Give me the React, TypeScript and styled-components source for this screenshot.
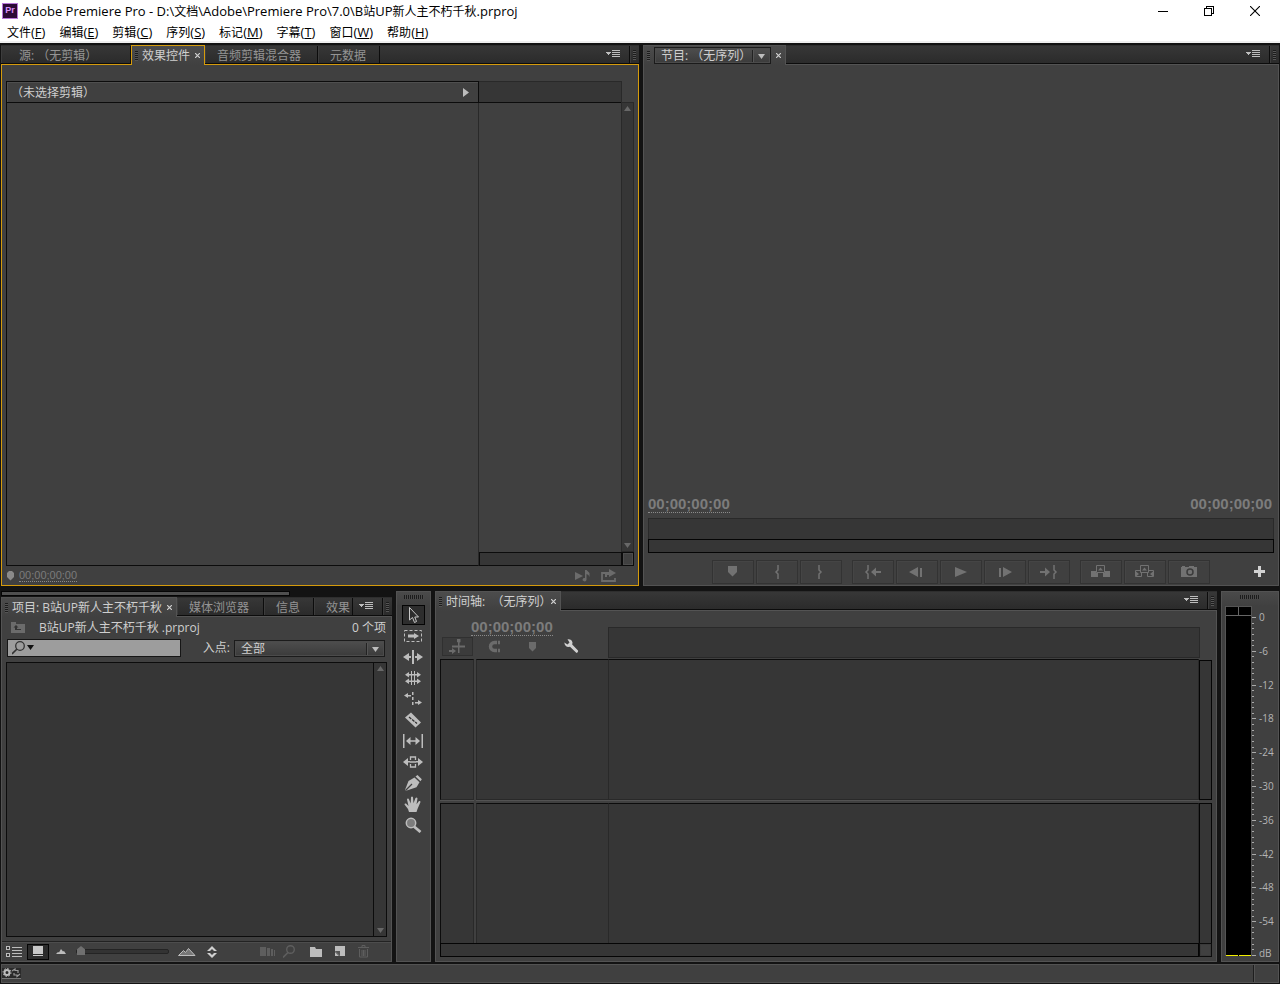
import React from "react";
import styled, { createGlobalStyle, css } from "styled-components";

const c = {
  app: "#131313",
  panel: "#404040",
  well: "#363636",
  edge: "#535353",
  line: "#0c0c0c",
  soft: "#292929",
  gold: "#d59b0c",
  text: "#cfcfcf",
  dim: "#949494",
  off: "#6b6b6b",
  icon: "#bdbdbd",
};

const Global = createGlobalStyle`
  *, *::before, *::after { box-sizing: border-box; }
  body {
    margin: 0;
    background: ${c.app};
    color: ${c.text};
    font: 12px/16px "Open Sans", "Noto Sans CJK SC", sans-serif;
    text-spacing-trim: space-all;
  }
  button, input, select {
    margin: 0;
    padding: 0;
    border: 0;
    background: none;
    color: inherit;
    font: inherit;
  }
  svg { display: block; flex: none; }
`;

const Window = styled.div`
  display: flex;
  flex-direction: column;
  min-height: 100vh;
`;

/* ---------- window frame ---------- */

const Header = styled.header`
  background: #fff;
  color: #000;
  border-bottom: 2px solid #f0f0f0;
`;

const TitleBar = styled.div`
  display: flex;
  align-items: center;
  height: 22px;
  padding: 0 2px;
`;

const Logo = styled.span`
  width: 16px;
  height: 16px;
  border: 1px solid #b777d8;
  background: #2c0a36;
  color: #d891f8;
  font: bold 9px/13px "Liberation Sans", sans-serif;
  text-align: center;
`;

const Title = styled.h1`
  flex: 1;
  margin: 0 0 0 5px;
  font-size: 13px;
  font-weight: 400;
  line-height: 20px;
  white-space: nowrap;
  overflow: hidden;
`;

const Han = styled.span`
  font-size: 12px;
`;

const WindowButton = styled.button`
  display: flex;
  justify-content: center;
  align-items: center;
  width: 46px;
  height: 20px;
`;

const MenuBar = styled.nav`
  display: flex;
  gap: 14px;
  height: 19px;
  padding-left: 7px;
`;

const MenuItem = styled.button`
  font-size: 13px;
  line-height: 20px;
  white-space: nowrap;
`;

/* ---------- work area ---------- */

const Workspace = styled.main`
  flex: 1;
  display: grid;
  grid-template-rows: minmax(300px, 541fr) minmax(300px, 371fr);
  row-gap: 5px;
  padding: 2px 1px;
`;

const TopRow = styled.div`
  display: grid;
  grid-template-columns: minmax(0, 638fr) minmax(0, 636fr);
  gap: 4px;
`;

const BottomRow = styled.div`
  display: grid;
  grid-template-columns: minmax(0, 391fr) 35px minmax(0, 782fr) 58px;
  gap: 4px;
`;

const Panel = styled.section`
  display: flex;
  flex-direction: column;
  flex: 1;
  min-width: 0;
`;

const TabBar = styled.div`
  display: flex;
  height: 19px;
  background: linear-gradient(#373737, #2b2b2b);
  border-top: 1px solid #2e2e2e;
  border-bottom: 1px solid ${c.line};
`;

const Tab = styled.button<{ $w: number; $pad?: number }>`
  width: ${(p) => p.$w}px;
  padding-left: ${(p) => p.$pad ?? 12}px;
  border-right: 1px solid ${c.line};
  box-shadow: inset 1px 0 #3d3d3d;
  color: ${c.dim};
  line-height: 19px;
  text-align: left;
  white-space: nowrap;
  overflow: hidden;
`;

const ActiveTab = styled.div<{ $focus?: boolean }>`
  position: relative;
  display: flex;
  align-items: center;
  margin: -1px 0 -2px;
  padding: 0 2px 0 3px;
  background: linear-gradient(#4c4c4c, ${c.panel});
  border: 1px solid ${(p) => (p.$focus ? c.gold : c.edge)};
  border-bottom: 0;
  white-space: nowrap;
`;

const TabLabel = styled.button<{ $tight?: boolean }>`
  line-height: 18px;
  margin-left: 4px;
  margin-right: ${(p) => (p.$tight ? -5 : 0)}px;
`;

const CloseButton = styled.button`
  display: flex;
  padding: 4px 2px 4px 5px;
`;

const BarEnd = styled.div`
  display: flex;
  align-items: center;
  margin-left: auto;
`;

const MenuButton = styled.button`
  display: flex;
  align-items: center;
  height: 17px;
  padding-right: 8px;
`;

const GripCell = styled.span`
  display: flex;
  align-items: center;
  height: 17px;
  padding: 0 3px;
  border-left: 1px solid ${c.line};
  box-shadow: inset 1px 0 #3d3d3d;
`;

const Grip = styled.span<{ $wide?: boolean }>`
  display: block;
  flex: none;
  ${(p) =>
    p.$wide
      ? css`
          width: 20px;
          height: 4px;
          background: repeating-linear-gradient(90deg, #1c1c1c 0 1px, #4a4a4a 1px 2px);
        `
      : css`
          width: 3px;
          height: 10px;
          background: repeating-linear-gradient(#1c1c1c 0 1px, #555 1px 2px);
        `}
`;

const Body = styled.div<{ $focus?: boolean }>`
  flex: 1;
  display: flex;
  flex-direction: column;
  min-height: 0;
  background: ${c.panel};
  border: 1px solid ${(p) => (p.$focus ? c.gold : c.edge)};
`;

/* ---------- effect controls ---------- */

const EffectGrid = styled.div`
  flex: 1;
  display: grid;
  grid-template-columns: minmax(0, 473fr) minmax(0, 143fr) 12px;
  grid-template-rows: 22px 1fr 14px;
  margin: 16px 4px 0;
`;

const ClipHeader = styled.div`
  display: flex;
  align-items: center;
  justify-content: space-between;
  padding: 1px 9px 0 4px;
  border: 1px solid ${c.line};
  box-shadow: inset 1px 1px #4f4f4f;
`;

const ClipRuler = styled.div`
  background: ${c.well};
  border: 1px solid ${c.soft};
  border-left: 0;
  border-bottom-color: ${c.line};
`;

const ClipList = styled.div`
  grid-row: span 2;
  border: 1px solid ${c.line};
  border-top: 0;
  border-right-color: ${c.soft};
`;

const ClipTrack = styled.div``;

const ScrollColumn = styled.div<{ $top?: boolean }>`
  display: flex;
  flex-direction: column;
  justify-content: space-between;
  align-items: center;
  padding: 3px 0;
  background: ${c.well};
  border: 1px solid ${c.soft};
  ${(p) => p.$top && css`margin: -1px 0 0 -1px;`}
`;

const ClipScroll = styled.div`
  background: ${c.well};
  border: 1px solid ${c.line};
`;

const ScrollCorner = styled.div`
  border: 1px solid ${c.line};
  background: ${c.panel};
  box-shadow: inset 0 0 0 1px #4d4d4d;
`;

const EffectFooter = styled.div`
  display: flex;
  align-items: center;
  height: 19px;
  padding: 0 21px 0 5px;
  color: #7b7b7b;
`;

const SmallTime = styled.span`
  flex: 1;
  margin-left: 4px;
  font: 11px/11px "Liberation Sans", sans-serif;

  span {
    display: inline-block;
    border-bottom: 1px dotted #8a8a8a;
  }
`;

const IconButton = styled.button<{ $ml?: number }>`
  display: flex;
  align-items: center;
  justify-content: center;
  margin-left: ${(p) => p.$ml ?? 0}px;
`;

/* ---------- program monitor ---------- */

const SelectBox = styled.span<{ $w: number }>`
  position: relative;
  display: block;
  width: ${(p) => p.$w}px;
  height: 17px;
  border: 1px solid #1b1b1b;
  background: linear-gradient(#4e4e4e, #3b3b3b);
  box-shadow: inset 0 0 0 1px #4b4b4b;

  select {
    display: block;
    width: 100%;
    height: 100%;
    padding-left: 6px;
    appearance: none;
  }

  svg {
    position: absolute;
    top: 2px;
    right: 4px;
    pointer-events: none;
  }
`;

const ProgramSelectBox = styled(SelectBox)`
  margin-left: 4px;
`;

const Stage = styled.div`
  flex: 1;
`;

const TimeRow = styled.div`
  display: flex;
  justify-content: space-between;
  padding: 0 6px 0 4px;
`;

const TimeCode = styled.span<{ $link?: boolean }>`
  font: bold 15px/16px "Liberation Sans", sans-serif;
  color: #7c7c7c;
  border-bottom: 1px ${(p) => (p.$link ? "dotted #8a8a8a" : "solid transparent")};
`;

const MonitorRuler = styled.div`
  height: 21px;
  margin: 5px 4px 0;
  background: ${c.well};
  border: 1px solid ${c.soft};
  border-bottom: 0;
`;

const MonitorScroll = styled.div`
  height: 14px;
  margin: 0 4px;
  background: ${c.well};
  border: 1px solid #050505;
`;

const Transport = styled.div`
  display: flex;
  align-items: center;
  height: 32px;
  padding-top: 6px;

  &::before {
    content: "";
    flex: 1;
    padding-left: 12px;
  }
`;

const TransportGroups = styled.div`
  display: flex;
  gap: 10px;
`;

const TransportGroup = styled.div`
  display: flex;
  gap: 2px;
`;

const TransportButton = styled.button`
  display: flex;
  align-items: center;
  justify-content: center;
  width: 42px;
  height: 24px;
  border: 1px solid #333;
  box-shadow: inset 1px 1px #454545;
`;

const TransportEnd = styled.div`
  flex: 1;
  display: flex;
  justify-content: flex-end;
  padding-right: 12px;
`;

/* ---------- project ---------- */

const ProjectColumn = styled.div`
  display: flex;
  flex-direction: column;
  min-width: 0;
`;

const FrameScroll = styled.div`
  width: 74%;
  height: 5px;
  margin-bottom: 1px;
  background: #4f4f4f;
  border: 1px solid #050505;
`;

const ProjectInfo = styled.div`
  display: flex;
  align-items: center;
  height: 20px;
  margin-top: 1px;
  padding: 0 5px 0 9px;
`;

const ProjectName = styled.span`
  flex: 1;
  margin-left: 13px;
  white-space: nowrap;
`;

const FilterRow = styled.div`
  display: flex;
  align-items: center;
  justify-content: space-between;
  height: 20px;
  padding: 0 6px 0 5px;
`;

const SearchBox = styled.label`
  display: flex;
  align-items: center;
  width: 174px;
  height: 18px;
  padding-left: 4px;
  background: #9d9d9d;
  border: 1px solid #161616;

  input {
    width: 140px;
    color: #111;
    outline: 0;
  }
`;

const FilterLabel = styled.label`
  display: flex;
  align-items: center;
  gap: 4px;
`;

const BinRow = styled.div`
  flex: 1;
  display: flex;
  margin: 4px 4px 4px;
`;

const Bin = styled.div`
  flex: 1;
  background: ${c.well};
  border: 1px solid ${c.line};
`;

const BinScroll = styled(ScrollColumn)`
  width: 13px;
  border-color: ${c.line};
  border-left: 0;
`;

const BinTools = styled.div`
  display: flex;
  align-items: center;
  height: 20px;
  padding: 0 21px 0 3px;
  border-top: 1px solid #222;
  box-shadow: inset 0 1px #4d4d4d;
`;

const ViewToggle = styled(IconButton)`
  width: 22px;
  height: 16px;
  border: 1px solid #050505;
  background: #2c2c2c;
`;

const ZoomSlider = styled.input`
  width: 93px;
  height: 12px;
  margin-left: 10px;
  appearance: none;

  &::-webkit-slider-runnable-track {
    height: 5px;
    border: 1px solid #242424;
    border-radius: 2px;
    background: #333;
  }

  &::-webkit-slider-thumb {
    appearance: none;
    width: 8px;
    height: 9px;
    margin-top: -4px;
    background: #707070;
    clip-path: polygon(50% 0, 100% 35%, 100% 100%, 0 100%, 0 35%);
  }
`;

const Spacer = styled.span`
  flex: 1;
`;

/* ---------- tools ---------- */

const ToolPanel = styled.section`
  display: flex;
  flex-direction: column;
  align-items: center;
  padding-top: 3px;
  background: linear-gradient(#4a4a4a, ${c.panel} 14px);
  border: 1px solid ${c.edge};
`;

const ToolList = styled.div`
  display: flex;
  flex-direction: column;
  align-items: center;
  gap: 1px;
  margin: 6px 1px 0 0;
`;

const Tool = styled.button<{ $on?: boolean }>`
  display: flex;
  align-items: center;
  justify-content: center;
  width: 23px;
  height: 20px;
  border: 1px solid ${(p) => (p.$on ? "#050505" : "transparent")};
  background: ${(p) => (p.$on ? "#2d2d2d" : "none")};
`;

/* ---------- timeline ---------- */

const TimelineHead = styled.div`
  display: flex;
  height: 48px;
  padding: 0 16px 0 4px;
`;

const TimelineControls = styled.div`
  width: 168px;
  padding: 8px 0 0 2px;

  ${TimeCode} {
    display: inline-block;
    margin-left: 29px;
  }
`;

const TimelineButtons = styled.div`
  display: flex;
  align-items: center;
  height: 19px;
  margin-top: 1px;
`;

const SequenceToggle = styled(IconButton)`
  width: 31px;
  height: 19px;
  border: 1px solid #303030;
  background: #3b3b3b;
`;

const TimeRuler = styled.div`
  flex: 1;
  height: 31px;
  margin-top: 16px;
  background: ${c.well};
  border: 1px solid ${c.soft};
`;

const TrackGrid = styled.div`
  flex: 1;
  display: grid;
  grid-template-columns: 34px 134px minmax(0, 1fr) 13px;
  grid-template-rows: 144fr 140fr 14px;
  margin: 0 4px 4px;
`;

const TrackCell = styled.div<{ $left?: boolean; $gap?: boolean; $upper?: boolean }>`
  background: ${c.well};
  border: 1px solid ${c.soft};
  border-top-color: ${c.line};
  ${(p) => p.$gap && css`margin-left: 2px; border-right: 0;`}
  ${(p) => p.$left && css`border-left-color: ${c.line};`}
  ${(p) => (p.$upper ? css`margin-bottom: 3px; box-shadow: 0 1px ${c.edge};` : css`border-bottom: 0;`)}
`;

const TrackScroll = styled.div<{ $upper?: boolean }>`
  background: ${c.well};
  border: 1px solid #050505;
  ${(p) => (p.$upper ? css`margin: 1px 0 3px;` : css`border-bottom: 0;`)}
`;

const TrackScrollX = styled.div`
  grid-column: span 3;
  background: ${c.well};
  border: 1px solid #050505;
`;

const TrackCorner = styled(ScrollCorner)`
  box-shadow: inset 0 0 0 1px #3a3a3a;
`;

/* ---------- audio meter ---------- */

const MeterPanel = styled(ToolPanel)`
  align-items: stretch;

  > ${Grip} {
    align-self: center;
  }
`;

const MeterRow = styled.div`
  flex: 1;
  display: flex;
  margin: 7px 0 5px 3px;
`;

const Meter = styled.div`
  display: grid;
  grid-template-columns: 1fr 1fr;
  grid-template-rows: 9px 1fr;
  column-gap: 1px;
  width: 27px;
  border: 1px solid #555;
  border-bottom: 0;
  background: linear-gradient(#666 0 9px, #000 9px);
`;

const Peak = styled.span`
  background: #000;
  border-bottom: 1px solid #666;
`;

const Channel = styled.span`
  background: #000;
  border-bottom: 1px solid #f2ee00;
`;

const Scale = styled.div`
  flex: 1;
  display: flex;
  flex-direction: column;
  padding: 11px 0 0;
`;

const Step = styled.div`
  flex: 1;
  display: flex;
`;

const Ticks = styled.div`
  display: flex;
  flex-direction: column;
  width: 5px;
`;

const Tick = styled.span<{ $major?: boolean }>`
  flex: 1;
  width: ${(p) => (p.$major ? 4 : 2)}px;
  border-top: 1px solid #aaa;
`;

const LastStep = styled.div`
  display: flex;
  height: 1px;
`;

const Level = styled.span`
  margin: -7px 0 0 2px;
  color: #b4b4b4;
  font-size: 10px;
  line-height: 14px;
`;

const DbLabel = styled(Level)`
  margin-top: -9px;
`;

const StatusBar = styled.footer`
  display: flex;
  justify-content: space-between;
  height: 19px;
  margin: 0 1px 1px;
  background: ${c.panel};
  border: 1px solid ${c.edge};
`;

const StatusButton = styled.button`
  display: flex;
  align-items: center;
  width: 19px;
  height: 11px;
  margin-top: 3px;
  background: #2a2a2a;
  border-bottom: 1px solid #777;
`;

const StatusEnd = styled.span`
  width: 25px;
  border-left: 1px solid #1e1e1e;
  box-shadow: inset 1px 0 ${c.edge};
`;

/* ---------- drawings ---------- */

type Art = { w: number; h: number; color?: string; crisp?: boolean; children: React.ReactNode };

const Svg = ({ w, h, color = c.icon, crisp, children }: Art) => (
  <svg
    width={w}
    height={h}
    viewBox={`0 0 ${w} ${h}`}
    fill={color}
    stroke="none"
    shapeRendering={crisp ? "crispEdges" : undefined}
    aria-hidden="true"
  >
    {children}
  </svg>
);

const CloseMark = () => (
  <Svg w={5} h={5}>
    <path d="M0 0L5 5M5 0L0 5" stroke="#d0d0d0" strokeWidth="1.2" />
  </Svg>
);

const PanelMenuMark = () => (
  <Svg w={15} h={9} crisp>
    <path d="M0 2h5v1H4v1H3v1H2V4H1V3H0z" />
    <path d="M6 0h8v1H6zM6 2h8v1H6zM6 4h8v1H6zM6 6h8v1H6z" />
  </Svg>
);

const ArrowUp = () => (
  <Svg w={7} h={5} color="#686868">
    <path d="M3.500 0L7 5H0z" />
  </Svg>
);

const ArrowDown = () => (
  <Svg w={7} h={5} color="#686868">
    <path d="M0 0H7L3.500 5z" />
  </Svg>
);

const SelectMark = () => (
  <Svg w={14} h={12}>
    <path d="M0 0h1v12H0z" fill="#222" />
    <path d="M1 0h1v12H1z" fill="#555" />
    <path d="M6 4h7L9.500 9z" />
  </Svg>
);

const tools: { name: string; art: React.ReactNode }[] = [
  {
    name: "选择工具",
    art: <path d="M6.500 0.500V13L9.500 10.500L11.500 15.500L13.500 14.500L11.800 10H15.500Z" fill="#2d2d2d" stroke="#c8c8c8" />,
  },
  {
    name: "轨道选择工具",
    art: (
      <>
        <rect x="1.500" y="2.500" width="17" height="11" fill="none" stroke={c.icon} strokeDasharray="3 2" />
        <path d="M5 6.500h6V5l5 3-5 3V9.500H5z" />
      </>
    ),
  },
  {
    name: "波纹编辑工具",
    art: <path d="M9 1h2v14H9zM0 8l6-4v3h2v2H6v3zM20 8l-6-4v3h-2v2h2v3z" />,
  },
  {
    name: "滚动编辑工具",
    art: (
      <>
        <path d="M8 1h1v14H8zM11 1h1v14h-1zM4 4h12v1.500H4zM4 10.500h12V12H4z" />
        <path d="M2 4.700L6 2v5.500zM18 4.700L14 2v5.500zM2 11.300L6 8.500V14zM18 11.300L14 8.500V14z" />
      </>
    ),
  },
  {
    name: "比率拉伸工具",
    art: (
      <>
        <path d="M9 1h1.500v3H9zM9 6h1.500v3H9zM9 11h1.500v3H9z" />
        <path d="M1 4.500L5 2v2h3v1.500H5V7zM19 11.500L15 9v2h-3v1.500h3V14z" />
      </>
    ),
  },
  {
    name: "剃刀工具",
    art: (
      <>
        <path d="M8 0.500L18 10.500 12.500 15.500 2 5.500z" />
        <path d="M6 5l8 6.500" stroke="#303030" strokeWidth="1.300" strokeDasharray="3 1" />
      </>
    ),
  },
  {
    name: "外滑工具",
    art: <path d="M0 1h1.500v14H0zM18.500 1H20v14h-1.500zM3 8l4.500-4v3.300h5V4L17 8l-4.500 4V8.700h-5V12z" />,
  },
  {
    name: "内滑工具",
    art: (
      <>
        <path d="M0 8l5-4v3h2v1.500H5V12zM20 8l-5-4v3h-2v1.500h2V12z" />
        <path d="M7.500 6V3h5v3M7.500 10v3h5v-3M7 8h6" fill="none" stroke={c.icon} strokeWidth="1.300" />
      </>
    ),
  },
  {
    name: "钢笔工具",
    art: (
      <>
        <path d="M12.500 1.500L14.500 0 18.800 4.200 17.500 6.300z" />
        <path d="M11.500 2.500l5 4.700-3 5L3 15.700 2 15 5.500 6z" />
        <path d="M2.500 15.500L9 9" stroke="#404040" strokeWidth="1.200" />
      </>
    ),
  },
  {
    name: "手形工具",
    art: (
      <path d="M6 16L5 13 1.500 8.500Q1.500 7 3 7.500L5.500 10 4 3.500Q4.300 2 5.700 2.800L7.700 7.500 8 1.200Q9 -.3 10 1.200L10.500 7.200 12.500 2Q14 1 14.500 2.500L13.500 8.200 16 5Q17.500 4.600 17.500 6L14.500 13 13.500 16z" />
    ),
  },
  {
    name: "缩放工具",
    art: (
      <>
        <circle cx="8" cy="6" r="4.700" fill="#7d7d7d" stroke={c.icon} strokeWidth="1.500" />
        <path d="M11 9.500l6.500 5.500" stroke={c.icon} strokeWidth="2.800" />
      </>
    ),
  },
];

const openBrace = "M6 1v5L4 8l2 2v5";
const closeBrace = "M4 1v5l2 2-2 2v5";

const transport: { name: string; art: React.ReactNode }[][] = [
  [
    { name: "添加标记", art: <path d="M6 2h9v6l-4.500 4.500L6 8z" /> },
    { name: "标记入点", art: <path d={openBrace} transform="translate(6 0)" fill="none" stroke="#727272" strokeWidth="1.500" /> },
    { name: "标记出点", art: <path d={closeBrace} transform="translate(5 0)" fill="none" stroke="#727272" strokeWidth="1.500" /> },
  ],
  [
    {
      name: "转到入点",
      art: (
        <>
          <path d={openBrace} fill="none" stroke="#727272" strokeWidth="1.500" />
          <path d="M9 8l5-4.500V7h5v2h-5v3.500z" />
        </>
      ),
    },
    { name: "后退一帧", art: <path d="M3 8l9-5v10zM14 4h2v9h-2z" /> },
    { name: "播放", art: <path d="M5 3l12 5-12 5z" /> },
    { name: "前进一帧", art: <path d="M18 8L9 3v10zM5 4h2v9H5z" /> },
    {
      name: "转到出点",
      art: (
        <>
          <path d={closeBrace} transform="translate(12 0)" fill="none" stroke="#727272" strokeWidth="1.500" />
          <path d="M12 8L7 3.500V7H2v2h5v3.500z" />
        </>
      ),
    },
  ],
  [
    {
      name: "提升",
      art: (
        <>
          <path d="M1 7h5v2h2v4H1zM20 7h-5v2h-2v4h7z" />
          <path d="M6.500 1.500h8v7h-8z" fill="none" stroke="#727272" />
          <path d="M8 6.500L10.500 3.500 13 6.500z" />
        </>
      ),
    },
    {
      name: "提取",
      art: (
        <>
          <path d="M6.500 6.500h-5v6h6V9M14.500 6.500h5v6h-6V9" fill="none" stroke="#727272" />
          <path d="M2 7.500L5 10l-3 2.500zM19 7.500L16 10l3 2.500z" />
          <path d="M6.500 1.500h8v7h-8z" fill="none" stroke="#727272" />
          <path d="M8 6.500L10.500 3.500 13 6.500z" />
        </>
      ),
    },
    {
      name: "导出帧",
      art: (
        <>
          <path d="M3 3h1V2h3v1h4V2h5v1h3v10H3z" />
          <circle cx="12" cy="8" r="3" fill="#727272" stroke="#3b3b3b" strokeWidth="1.500" />
        </>
      ),
    },
  ],
];

const menus = [
  ["文件", "F"],
  ["编辑", "E"],
  ["剪辑", "C"],
  ["序列", "S"],
  ["标记", "M"],
  ["字幕", "T"],
  ["窗口", "W"],
  ["帮助", "H"],
];

const levels = ["0", "-6", "-12", "-18", "-24", "-30", "-36", "-42", "-48", "-54"];
const minor = [0, 1, 2, 3, 4, 5];

/* ---------- parts ---------- */

const PanelEnd = () => (
  <BarEnd>
    <MenuButton aria-label="面板菜单">
      <PanelMenuMark />
    </MenuButton>
    <GripCell>
      <Grip />
    </GripCell>
  </BarEnd>
);

const Close = () => (
  <CloseButton aria-label="关闭">
    <CloseMark />
  </CloseButton>
);

const EffectControls = () => (
  <Panel>
    <TabBar>
      <Tab $w={130} $pad={18}>源: （无剪辑）</Tab>
      <ActiveTab $focus>
        <Grip />
        <TabLabel>效果控件</TabLabel>
        <Close />
      </ActiveTab>
      <Tab $w={113}>音频剪辑混合器</Tab>
      <Tab $w={62}>元数据</Tab>
      <PanelEnd />
    </TabBar>
    <Body $focus>
      <EffectGrid>
        <ClipHeader>
          <span>（未选择剪辑）</span>
          <Svg w={6} h={9}>
            <path d="M0 0l6 4.500L0 9z" />
          </Svg>
        </ClipHeader>
        <ClipRuler />
        <span />
        <ClipList />
        <ClipTrack />
        <ScrollColumn $top>
          <ArrowUp />
          <ArrowDown />
        </ScrollColumn>
        <ClipScroll />
        <ScrollCorner />
      </EffectGrid>
      <EffectFooter>
        <Svg w={8} h={10} color="#8a8a8a">
          <path d="M2 0h3l2 2v4L3.500 9.500 0 6V2z" />
        </Svg>
        <SmallTime>
          <span>00;00;00;00</span>
        </SmallTime>
        <IconButton aria-label="播放音频">
          <Svg w={16} h={12} color={c.off}>
            <path d="M0 2l8 4-8 4zM10 0h1.500l3 3v4l-1-2-2-1v6a2 1.700 0 1 1-1.500-2z" />
          </Svg>
        </IconButton>
        <IconButton $ml={10} aria-label="导出">
          <Svg w={16} h={13} color={c.off}>
            <path d="M4 4H1v8h13V9" fill="none" stroke={c.off} strokeWidth="1.800" />
            <path d="M4 8V3h4V0l7 4-7 4V6H6v2z" />
          </Svg>
        </IconButton>
      </EffectFooter>
    </Body>
  </Panel>
);

const ProgramMonitor = () => (
  <Panel>
    <TabBar>
      <ActiveTab>
        <Grip />
        <ProgramSelectBox $w={117}>
          <select aria-label="节目">
            <option>节目: （无序列）</option>
          </select>
          <SelectMark />
        </ProgramSelectBox>
        <Close />
      </ActiveTab>
      <PanelEnd />
    </TabBar>
    <Body>
      <Stage />
      <TimeRow>
        <TimeCode $link>00;00;00;00</TimeCode>
        <TimeCode>00;00;00;00</TimeCode>
      </TimeRow>
      <MonitorRuler />
      <MonitorScroll />
      <Transport>
        <TransportGroups>
          {transport.map((group, i) => (
            <TransportGroup key={i}>
              {group.map((b) => (
                <TransportButton key={b.name} aria-label={b.name}>
                  <Svg w={22} h={16} color="#727272">
                    {b.art}
                  </Svg>
                </TransportButton>
              ))}
            </TransportGroup>
          ))}
        </TransportGroups>
        <TransportEnd>
          <IconButton aria-label="按钮编辑器">
            <Svg w={12} h={12} color="#d2d2d2" crisp>
              <path d="M4 0h3v4h4v3H7v4H4V7H0V4h4z" />
            </Svg>
          </IconButton>
        </TransportEnd>
      </Transport>
    </Body>
  </Panel>
);

const ProjectPanel = () => (
  <ProjectColumn>
    <FrameScroll />
    <Panel>
      <TabBar>
        <ActiveTab>
          <Grip />
          <TabLabel>项目: B站UP新人主不朽千秋</TabLabel>
          <Close />
        </ActiveTab>
        <Tab $w={87}>媒体浏览器</Tab>
        <Tab $w={50}>信息</Tab>
        <Tab $w={39}>效果</Tab>
        <PanelEnd />
      </TabBar>
      <Body>
        <ProjectInfo>
          <Svg w={15} h={12} color={c.off}>
            <path d="M0 0h5v2h9v9H0z" />
            <path d="M5 3L2.500 5.500H4V8h6V7H6V5.500h1.500z" fill="#333" />
          </Svg>
          <ProjectName>B站UP新人主不朽千秋 .prproj</ProjectName>
          <span>0 个项</span>
        </ProjectInfo>
        <FilterRow>
          <SearchBox>
            <Svg w={23} h={14} color="#111">
              <circle cx="8" cy="5" r="4.300" fill="none" stroke="#333" strokeWidth="1.300" />
              <path d="M5 8L0 13" stroke="#333" strokeWidth="1.600" />
              <path d="M15 4h7l-3.500 5z" />
            </Svg>
            <input type="text" aria-label="搜索" />
          </SearchBox>
          <FilterLabel>
            入点:
            <SelectBox $w={151}>
              <select>
                <option>全部</option>
              </select>
              <SelectMark />
            </SelectBox>
          </FilterLabel>
        </FilterRow>
        <BinRow>
          <Bin />
          <BinScroll>
            <ArrowUp />
            <ArrowDown />
          </BinScroll>
        </BinRow>
        <BinTools>
          <IconButton aria-label="列表视图">
            <Svg w={18} h={12} crisp>
              <path d="M1 0h4v4H1zM1 7h4v4H1z" />
              <path d="M2 1h2v2H2zM2 8h2v2H2z" fill="#333" />
              <path d="M7 1h10v1H7zM7 4h10v1H7zM7 7h10v1H7zM7 10h10v1H7z" />
            </Svg>
          </IconButton>
          <ViewToggle $ml={4} aria-label="图标视图">
            <Svg w={10} h={11} color="#c8c8c8" crisp>
              <path d="M0 0h10v8H0zM0 9h10v1H0z" />
            </Svg>
          </ViewToggle>
          <IconButton $ml={7} aria-label="缩小">
            <Svg w={10} h={5}>
              <path d="M0 5l2-2 1 .5L5 0l2 2.500 1-.5 2 3z" />
            </Svg>
          </IconButton>
          <ZoomSlider type="range" min={0} max={100} defaultValue={0} aria-label="缩放" />
          <IconButton $ml={9} aria-label="放大">
            <Svg w={18} h={8} color="#777">
              <path d="M.5 7.500l5-5 2 2 3-4 6.500 7z" stroke={c.icon} />
            </Svg>
          </IconButton>
          <IconButton $ml={11} aria-label="排序图标">
            <Svg w={10} h={12} color="#d0d0d0">
              <path d="M5 0l5 5H7L5 3 3 5H0zM5 12l5-5H7L5 9 3 7H0z" />
            </Svg>
          </IconButton>
          <Spacer />
          <IconButton aria-label="自动匹配序列">
            <Svg w={16} h={9} color="#5e5e5e">
              <path d="M0 0h6v9H0zM7 1h3v8H7zM11 2h2v7h-2zM14 3h1v6h-1z" />
            </Svg>
          </IconButton>
          <IconButton $ml={7} aria-label="查找">
            <Svg w={13} h={13}>
              <circle cx="7.500" cy="4.500" r="3.800" fill="none" stroke="#5e5e5e" strokeWidth="1.400" />
              <path d="M5 7.500L0 12.500" stroke="#5e5e5e" strokeWidth="1.600" />
            </Svg>
          </IconButton>
          <IconButton $ml={14} aria-label="新建素材箱">
            <Svg w={13} h={10}>
              <path d="M0 0h5l1 2h6v8H0z" />
            </Svg>
          </IconButton>
          <IconButton $ml={12} aria-label="新建项">
            <Svg w={11} h={11}>
              <path d="M0 0h10v10H5L0 5z" />
              <path d="M0 5h5v5z" fill="#555" />
              <path d="M0 6v4h4z" />
            </Svg>
          </IconButton>
          <IconButton $ml={12} aria-label="清除">
            <Svg w={12} h={13}>
              <path
                d="M0 2.500h11M4 2V.5h3V2M1.500 4v8h8V4M4 5v6M5.500 5v6M7 5v6"
                fill="none"
                stroke="#5e5e5e"
              />
            </Svg>
          </IconButton>
        </BinTools>
      </Body>
    </Panel>
  </ProjectColumn>
);

const Timeline = () => (
  <Panel>
    <TabBar>
      <ActiveTab>
        <Grip />
        <TabLabel $tight>时间轴:{"\u00a0"} （无序列）</TabLabel>
        <Close />
      </ActiveTab>
      <PanelEnd />
    </TabBar>
    <Body>
      <TimelineHead>
        <TimelineControls>
          <TimeCode $link>00;00;00;00</TimeCode>
          <TimelineButtons>
            <SequenceToggle aria-label="嵌套序列">
              <Svg w={17} h={15} color={c.off}>
                <path d="M9 1h1.500v13H9zM3 6.500h13v2H3zM8 0h3.500v3L10 4 8 3zM0 11h3V9l4 3-4 3v-2H0z" />
              </Svg>
            </SequenceToggle>
            <IconButton $ml={15} aria-label="对齐">
              <Svg w={12} h={13} color={c.off}>
                <path d="M12 2.500H6.500a4 4 0 0 0 0 8H12" fill="none" stroke={c.off} strokeWidth="3.400" />
                <path d="M9 0h1v5H9zM9 8h1v5H9z" fill={c.panel} />
              </Svg>
            </IconButton>
            <IconButton $ml={29} aria-label="添加标记">
              <Svg w={8} h={10} color={c.off}>
                <path d="M0 0h7v6L3.500 9.500 0 6z" />
              </Svg>
            </IconButton>
            <IconButton $ml={27} aria-label="时间轴显示设置">
              <Svg w={15} h={15} color="#d0d0d0">
                <path d="M3.500.3Q7.500-.3 8.500 3.500L8.200 5.500 14 11.500Q14.500 13.500 12.500 14L6 7.800Q1 8.800.3 3.500L3.500 5.500 5.500 3.500z" />
              </Svg>
            </IconButton>
          </TimelineButtons>
        </TimelineControls>
        <TimeRuler />
      </TimelineHead>
      <TrackGrid>
        <TrackCell $left $upper />
        <TrackCell $gap $upper />
        <TrackCell $upper />
        <TrackScroll $upper />
        <TrackCell $left />
        <TrackCell $gap />
        <TrackCell />
        <TrackScroll />
        <TrackScrollX />
        <TrackCorner />
      </TrackGrid>
    </Body>
  </Panel>
);

const AudioMeter = () => (
  <MeterPanel aria-label="音频仪表">
    <Grip $wide />
    <MeterRow>
      <Meter>
        <Peak />
        <Peak />
        <Channel />
        <Channel />
      </Meter>
      <Scale>
        {levels.map((l) => (
          <Step key={l}>
            <Ticks>
              {minor.map((m) => (
                <Tick key={m} $major={m === 0} />
              ))}
            </Ticks>
            <Level>{l}</Level>
          </Step>
        ))}
        <LastStep>
          <Ticks>
            <Tick $major />
          </Ticks>
          <DbLabel>dB</DbLabel>
        </LastStep>
      </Scale>
    </MeterRow>
  </MeterPanel>
);

export default function App() {
  return (
    <Window>
      <Global />
      <Header>
        <TitleBar>
          <Logo>Pr</Logo>
          <Title>
            Adobe Premiere Pro - D:\<Han>文档</Han>\Adobe\Premiere Pro\7.0\B<Han>站</Han>UP
            <Han>新人主不朽千秋</Han>.prproj
          </Title>
          <WindowButton aria-label="最小化">
            <Svg w={10} h={10} crisp>
              <path d="M0 5h10v1H0z" fill="#000" />
            </Svg>
          </WindowButton>
          <WindowButton aria-label="还原">
            <Svg w={10} h={10} crisp>
              <path d="M0.500 2.500h7v7h-7zM2.500 2V.5h7v7H8" fill="none" stroke="#000" />
            </Svg>
          </WindowButton>
          <WindowButton aria-label="关闭窗口">
            <Svg w={10} h={10}>
              <path d="M0 0l10 10M10 0L0 10" stroke="#000" strokeWidth="1.100" />
            </Svg>
          </WindowButton>
        </TitleBar>
        <MenuBar>
          {menus.map(([label, key]) => (
            <MenuItem key={key}>
              <Han>{label}</Han>(<u>{key}</u>)
            </MenuItem>
          ))}
        </MenuBar>
      </Header>
      <Workspace>
        <TopRow>
          <EffectControls />
          <ProgramMonitor />
        </TopRow>
        <BottomRow>
          <ProjectPanel />
          <ToolPanel aria-label="工具">
            <Grip $wide />
            <ToolList>
              {tools.map((t, i) => (
                <Tool key={t.name} $on={i === 0} aria-label={t.name}>
                  <Svg w={20} h={16}>{t.art}</Svg>
                </Tool>
              ))}
            </ToolList>
          </ToolPanel>
          <Timeline />
          <AudioMeter />
        </BottomRow>
      </Workspace>
      <StatusBar>
        <StatusButton aria-label="同步设置">
          <Svg w={19} h={10}>
            <circle cx="5" cy="4.500" r="2.500" fill="none" stroke={c.icon} strokeWidth="2" />
            <circle cx="5" cy="4.500" r="4" fill="none" stroke={c.icon} strokeWidth="1" strokeDasharray="1.500 1.600" />
            <path d="M10 3l3-2v1.500h3V5M18 6l-3 2.500V7h-3V5" fill="none" stroke="#999" strokeWidth="1.200" />
          </Svg>
        </StatusButton>
        <StatusEnd />
      </StatusBar>
    </Window>
  );
}
